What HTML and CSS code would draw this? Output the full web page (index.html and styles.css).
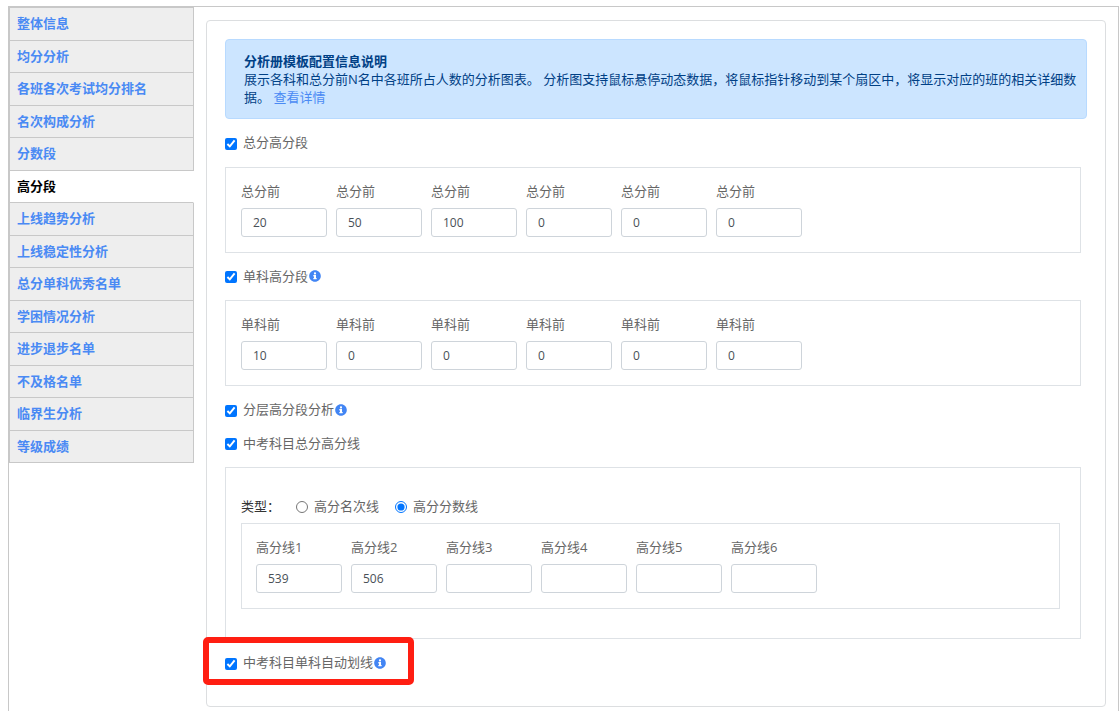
FILE: index.html
```html
<!DOCTYPE html>
<html lang="zh-CN">
<head>
<meta charset="utf-8">
<title>分析册模板配置</title>
<link rel="stylesheet" href="styles.css">
</head>
<body>
<svg class="sprite" aria-hidden="true">
  <symbol id="info" viewBox="0 0 512 512">
    <path d="M256 8C119 8 8 119 8 256s111 248 248 248 248-111 248-248S393 8 256 8zm0 90c26 0 46 20 46 46s-20 46-46 46-46-20-46-46 20-46 46-46zm72 286c0 7-5 12-12 12H196c-7 0-12-5-12-12v-36c0-7 5-12 12-12h16v-64h-16c-7 0-12-5-12-12v-36c0-7 5-12 12-12h92c7 0 12 5 12 12v112h16c7 0 12 5 12 12z"/>
  </symbol>
</svg>
<div class="page">
  <nav class="tabs">
    <a class="tab" href="#">整体信息</a>
    <a class="tab" href="#">均分分析</a>
    <a class="tab" href="#">各班各次考试均分排名</a>
    <a class="tab" href="#">名次构成分析</a>
    <a class="tab" href="#">分数段</a>
    <a class="tab active" href="#" aria-current="page">高分段</a>
    <a class="tab" href="#">上线趋势分析</a>
    <a class="tab" href="#">上线稳定性分析</a>
    <a class="tab" href="#">总分单科优秀名单</a>
    <a class="tab" href="#">学困情况分析</a>
    <a class="tab" href="#">进步退步名单</a>
    <a class="tab" href="#">不及格名单</a>
    <a class="tab" href="#">临界生分析</a>
    <a class="tab" href="#">等级成绩</a>
  </nav>
  <main class="card">
    <div class="notice">
      <strong>分析册模板配置信息说明</strong>
      <p>展示各科和总分前N名中各班所占人数的分析图表。 分析图支持鼠标悬停动态数据，将鼠标指针移动到某个扇区中，将显示对应的班的相关详细数据。 <a class="more" href="#">查看详情</a></p>
    </div>

    <div class="option"><label class="check"><input type="checkbox" checked>总分高分段</label></div>
    <section class="box fields">
      <label class="field">总分前<input type="text" value="20"></label>
      <label class="field">总分前<input type="text" value="50"></label>
      <label class="field">总分前<input type="text" value="100"></label>
      <label class="field">总分前<input type="text" value="0"></label>
      <label class="field">总分前<input type="text" value="0"></label>
      <label class="field">总分前<input type="text" value="0"></label>
    </section>

    <div class="option"><label class="check"><input type="checkbox" checked>单科高分段</label><svg class="info"><use href="#info"/></svg></div>
    <section class="box fields">
      <label class="field">单科前<input type="text" value="10"></label>
      <label class="field">单科前<input type="text" value="0"></label>
      <label class="field">单科前<input type="text" value="0"></label>
      <label class="field">单科前<input type="text" value="0"></label>
      <label class="field">单科前<input type="text" value="0"></label>
      <label class="field">单科前<input type="text" value="0"></label>
    </section>

    <div class="option"><label class="check"><input type="checkbox" checked>分层高分段分析</label><svg class="info"><use href="#info"/></svg></div>
    <div class="option"><label class="check"><input type="checkbox" checked>中考科目总分高分线</label></div>
    <section class="box lines">
      <div class="types" role="radiogroup" aria-labelledby="type-label">
        <span class="types-label" id="type-label">类型：</span>
        <label class="radio"><input type="radio" name="type">高分名次线</label>
        <label class="radio"><input type="radio" name="type" checked>高分分数线</label>
      </div>
      <div class="subbox fields">
        <label class="field">高分线1<input type="text" value="539"></label>
        <label class="field">高分线2<input type="text" value="506"></label>
        <label class="field">高分线3<input type="text"></label>
        <label class="field">高分线4<input type="text"></label>
        <label class="field">高分线5<input type="text"></label>
        <label class="field">高分线6<input type="text"></label>
      </div>
    </section>

    <div class="option marked"><label class="check"><input type="checkbox" checked>中考科目单科自动划线</label><svg class="info"><use href="#info"/></svg></div>
  </main>
</div>
</body>
</html>
```

FILE: styles.css
```css
*,
*::after {
  box-sizing: border-box;
}

body {
  margin: 0;
  padding: 6px 1px 0 8px;
  background: #fff;
  color: #666;
  font: 13px/1.5 "Open Sans", "Noto Sans CJK SC", sans-serif;
}

a {
  color: #4a8af4;
  text-decoration: none;
}

.sprite {
  display: none;
}

.page {
  display: flex;
  align-items: flex-start;
  gap: 12px;
  min-height: calc(100vh - 6px);
  padding-right: 12px;
  border: 1px solid #c8c8c8;
  border-bottom: 0;
}

/* Side tabs */
.tabs {
  display: flex;
  flex-direction: column;
  flex: 0 0 185px;
  border: 1px solid #c8c8c8;
  border-width: 1px 0 0 1px;
}

.tab {
  padding: 6px 7px;
  border: 1px solid #c8c8c8;
  border-width: 0 1px 1px 0;
  background: #eee;
  font-weight: 700;
}

.tab.active {
  border-right-color: #fff;
  background: #fff;
  color: #000;
}

/* Settings card */
.card {
  flex: 1;
  min-width: 0;
  margin-top: 13px;
  padding: 18px 18px 26px;
  border: 1px solid #dcdee0;
  border-radius: 4px;
}

.notice {
  margin-bottom: 7px;
  padding: 12px 4px 12px 18px;
  border: 1px solid #b8daff;
  border-radius: 4px;
  background: #cce5ff;
  color: #004085;
  line-height: 18px;
}

.notice strong {
  display: block;
}

.notice p {
  margin: 0;
}

.more {
  display: inline-block;
}

.option {
  display: flex;
  align-items: center;
  gap: 1px;
  padding: 7px 0;
}

.check,
.radio {
  display: flex;
  align-items: center;
  gap: 6px;
}

.check input,
.radio input {
  width: 12px;
  height: 12px;
  margin: 2px 0 0;
}

.info {
  width: 12px;
  height: 12px;
  fill: #4285f4;
}

.box,
.subbox {
  border: 1px solid #dee2e6;
}

.box {
  margin: 7px 6px 7px 0;
}

.fields {
  display: flex;
  flex-wrap: wrap;
  gap: 9px;
  padding: 14px 15px 15px;
}

.subbox {
  padding-left: 14px;
}

.field {
  display: flex;
  flex-direction: column;
  gap: 8px;
  width: 86px;
  line-height: 18px;
}

.field input {
  width: 100%;
  height: 29px;
  padding: 0 11px;
  border: 1px solid #ced4da;
  border-radius: 3px;
  background: #fff;
  color: #495057;
  font: 12px "Open Sans", sans-serif;
}

.lines {
  padding: 29px 20px 29px 15px;
}

.types {
  display: flex;
  align-items: center;
  gap: 16px;
  margin-bottom: 8px;
  line-height: 18px;
}

.types-label {
  color: #333;
}

/* Red frame laid over the option */
.marked {
  position: relative;
}

.marked::after {
  content: "";
  position: absolute;
  top: -9px;
  bottom: -5px;
  left: -22px;
  width: 211px;
  border: 6px solid #ff1e12;
  border-radius: 5px;
  pointer-events: none;
}
```
